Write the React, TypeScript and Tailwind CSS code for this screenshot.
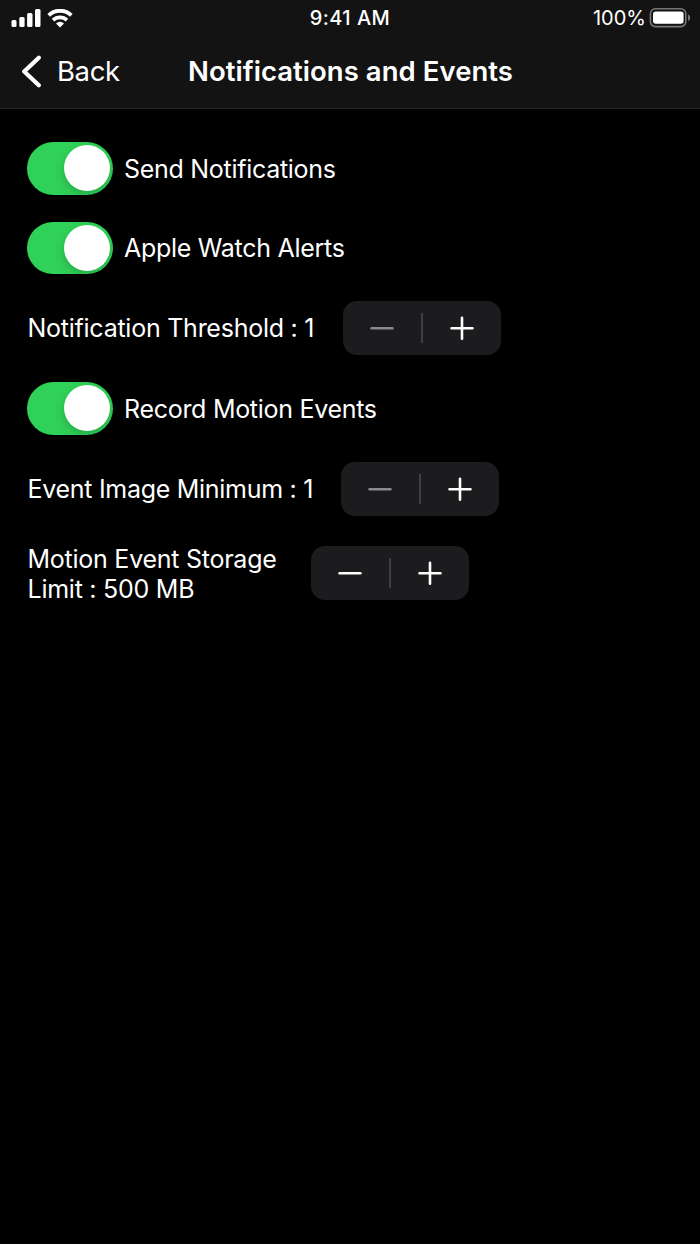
import { useState } from "react";
import clsx from "clsx";

function StatusBar() {
  return (
    <div className="grid h-9 grid-cols-3 items-center text-[20px] leading-9">
      <div className="flex items-center gap-[6px] pl-[11px]">
        <svg width="30" height="18" viewBox="0 0 30 18" fill="currentColor">
          <rect x="0.5" y="11" width="5" height="7" rx="1.5" />
          <rect x="8.3" y="8" width="5.3" height="10" rx="1.5" />
          <rect x="16.1" y="4" width="5.4" height="14" rx="1.5" />
          <rect x="24" y="0" width="5.5" height="18" rx="1.5" />
        </svg>
        <svg width="26" height="19" viewBox="0 0 26 19" fill="none" stroke="currentColor" strokeWidth="3.8">
          <path d="M1.7 6.3a16.3 16.3 0 0 1 22.6 0" />
          <path d="M6 11.2a10.1 10.1 0 0 1 14 0" />
          <path d="M13 18.4l-4-4a5.8 5.8 0 0 1 8 0z" fill="currentColor" stroke="none" />
        </svg>
      </div>
      <span className="text-center font-medium tracking-[0.45px]">9:41 AM</span>
      <div className="flex items-center justify-end gap-[3px] pr-[9px]">
        <span>100%</span>
        <svg width="42" height="20" viewBox="0 0 42 20" fill="none">
          <rect x="1.4" y="0.8" width="35.4" height="17.8" rx="5" stroke="#777777" strokeWidth="1.6" />
          <rect x="4" y="3.6" width="30.6" height="12.2" rx="2.8" fill="#ffffff" />
          <path d="M39 6.4c2.9 1.2 2.9 5.4 0 6.6z" fill="#777777" />
        </svg>
      </div>
    </div>
  );
}

function NavBar() {
  return (
    <div className="flex h-[72px] items-center text-[27.5px]">
      <button className="flex w-[188px] items-center gap-4 pl-[21px]">
        <svg className="relative -top-px" width="20" height="33" viewBox="0 0 20 33" fill="none" stroke="currentColor" strokeWidth="4.2" strokeLinecap="round" strokeLinejoin="round">
          <path d="M17.8 2.7L3.2 16.5l14.6 13.8" />
        </svg>
        <span className="tracking-[-0.4px]">Back</span>
      </button>
      <h1 className="font-semibold tracking-[0.05px] whitespace-nowrap">Notifications and Events</h1>
    </div>
  );
}

function Toggle({ label }: { label: string }) {
  const [on, setOn] = useState(true);

  return (
    <div className="flex items-center gap-[11px]">
      <button
        role="switch"
        aria-checked={on}
        aria-label={label}
        onClick={() => setOn(!on)}
        className={clsx(
          "flex h-[52.5px] w-[86px] items-center rounded-full px-[3px]",
          on ? "justify-end bg-[#30d158]" : "justify-start bg-[#39393d]"
        )}
      >
        <span className="size-[46px] rounded-full bg-white shadow-[0_4px_10px_rgba(0,0,0,0.18)]" />
      </button>
      <span className="pt-px tracking-[-0.29px]">{label}</span>
    </div>
  );
}

type StepperProps = {
  label: string;
  unit?: string;
  initial: number;
  min: number;
  step?: number;
  labelClass: string;
};

function Stepper({ label, unit = "", initial, min, step = 1, labelClass }: StepperProps) {
  const [value, setValue] = useState(initial);

  return (
    <div className="flex items-center">
      <span className={labelClass}>{`${label} : ${value}${unit}`}</span>
      <div className="flex h-[54px] w-[158.5px] items-center rounded-[14px] bg-[#1c1c1e]">
        <button
          aria-label="Decrease"
          disabled={value <= min}
          onClick={() => setValue(value - step)}
          className="flex h-full flex-1 items-center justify-center disabled:text-[#8b8b8d]"
        >
          <svg width="24" height="24" viewBox="0 0 24 24" stroke="currentColor" strokeWidth="2.4" strokeLinecap="round">
            <path d="M1.5 12.2h21" />
          </svg>
        </button>
        <span className="h-[30px] w-[1.5px] bg-[#3f3f42]" />
        <button
          aria-label="Increase"
          onClick={() => setValue(value + step)}
          className="flex h-full flex-1 items-center justify-center"
        >
          <svg width="24" height="24" viewBox="0 0 24 24" stroke="currentColor" strokeWidth="2.6" strokeLinecap="round">
            <path d="M1.5 12.2h21M12 1.7v21" />
          </svg>
        </button>
      </div>
    </div>
  );
}

export default function App() {
  return (
    <div className="min-h-[1244px] bg-black font-['Inter',sans-serif] text-white">
      <header className="h-[109px] border-b border-[#242424] bg-[#131313]">
        <StatusBar />
        <NavBar />
      </header>

      <main className="flex flex-col gap-[27px] pt-[33px] pl-[27px] text-[25px] leading-[30px] tracking-[-0.25px]">
        <Toggle label="Send Notifications" />
        <Toggle label="Apple Watch Alerts" />
        <Stepper
          label="Notification Threshold"
          initial={1}
          min={1}
          labelClass="w-[315.5px] pl-[0.5px] whitespace-nowrap"
        />
        <Toggle label="Record Motion Events" />
        <Stepper
          label="Event Image Minimum"
          initial={1}
          min={1}
          labelClass="w-[313.8px] pl-[0.5px] tracking-[-0.29px] whitespace-nowrap"
        />
        <Stepper
          label="Motion Event Storage Limit"
          unit=" MB"
          initial={500}
          min={100}
          step={100}
          labelClass="w-[283.5px] pt-px pr-5 pl-[0.5px]"
        />
      </main>
    </div>
  );
}
